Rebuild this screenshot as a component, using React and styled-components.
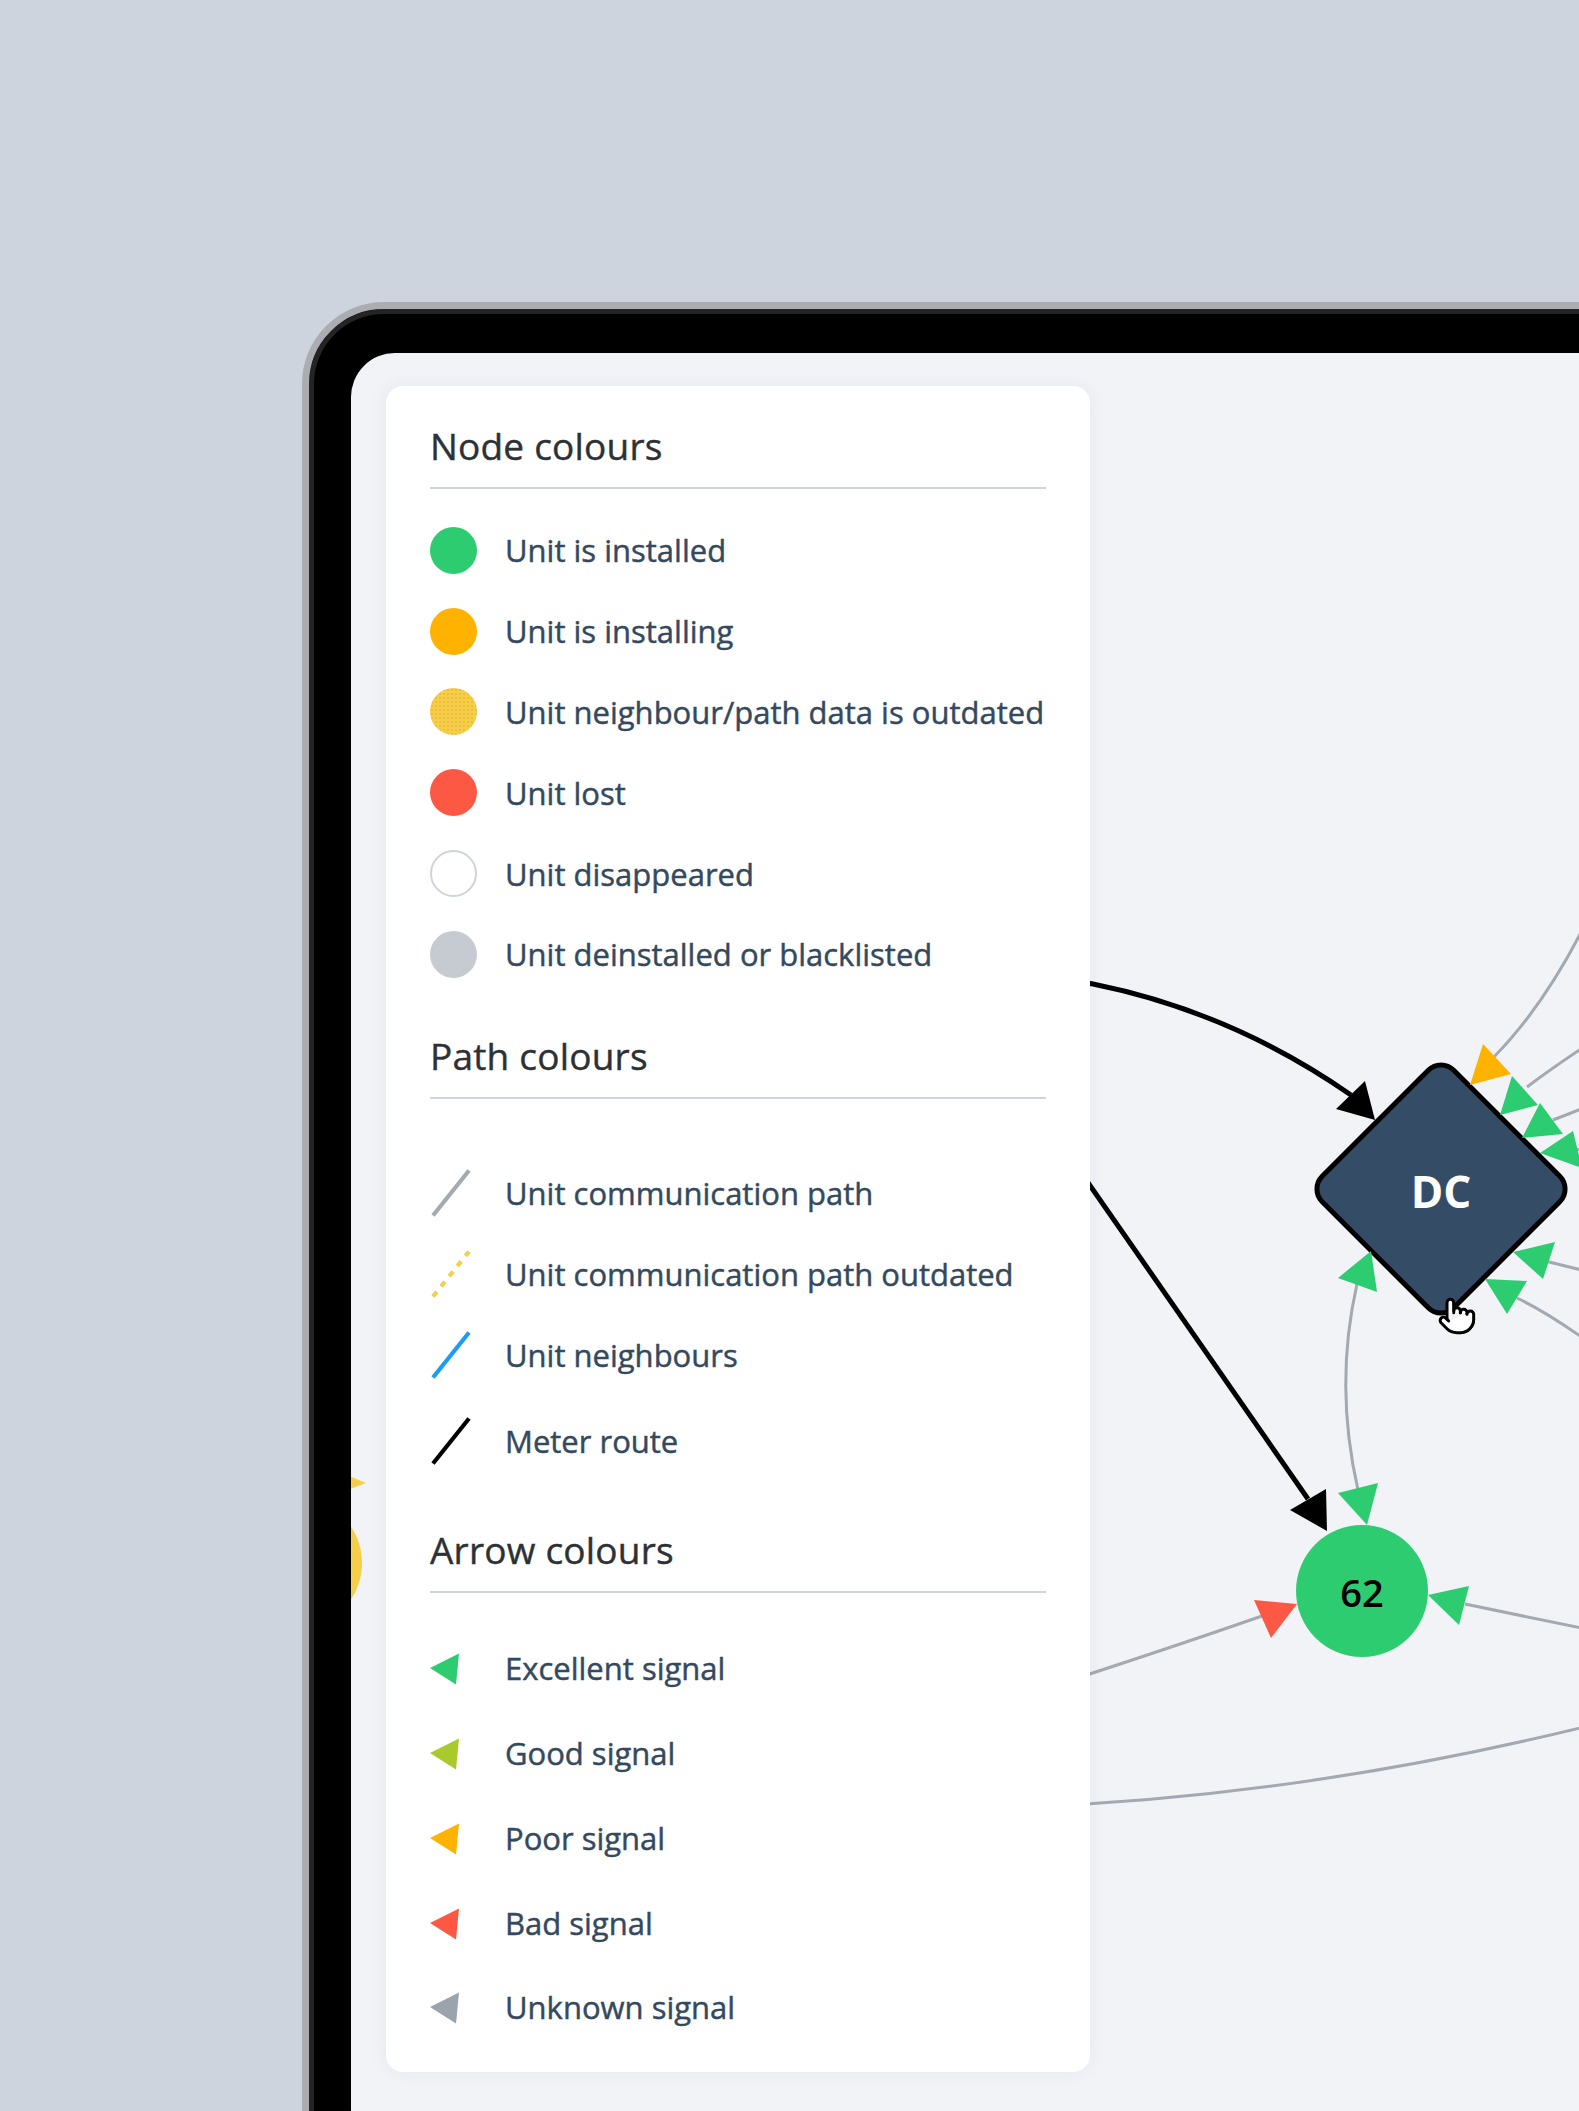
import React from 'react';
import styled, { createGlobalStyle } from 'styled-components';
import { Pointer } from 'lucide-react';

const GlobalStyle = createGlobalStyle`
  html, body {
    margin: 0;
    padding: 0;
    background: #cdd4de;
    overflow: hidden;
  }

  body {
    font-family: 'Open Sans', 'Noto Sans', sans-serif;
  }
`;

const nodeItems = [
  { label: 'Unit is installed', kind: 'installed' },
  { label: 'Unit is installing', kind: 'installing' },
  { label: 'Unit neighbour/path data is outdated', kind: 'outdated' },
  { label: 'Unit lost', kind: 'lost' },
  { label: 'Unit disappeared', kind: 'disappeared' },
  { label: 'Unit deinstalled or blacklisted', kind: 'deinstalled' },
];

const pathItems = [
  { label: 'Unit communication path', color: '#a4aab1' },
  { label: 'Unit communication path outdated', color: '#f5ce4a', dashed: true },
  { label: 'Unit neighbours', color: '#1e9cf1' },
  { label: 'Meter route', color: '#000000' },
];

const arrowItems = [
  { label: 'Excellent signal', color: '#2ecc71' },
  { label: 'Good signal', color: '#a9c92c' },
  { label: 'Poor signal', color: '#ffb200' },
  { label: 'Bad signal', color: '#fd5844' },
  { label: 'Unknown signal', color: '#9ba3ac' },
];

const nodeFills = {
  installed: '#2ecc71',
  installing: '#ffb300',
  outdated: '#f5cf4a',
  lost: '#fd5844',
  disappeared: '#ffffff',
  deinstalled: '#c6cad1',
};

const PathIcon = ({ color, dashed }) => (
  <svg width="42" height="50" viewBox="0 0 42 50">
    <line
      x1="3"
      y1="47.5"
      x2="39"
      y2="2.5"
      stroke={color}
      strokeWidth="4.2"
      strokeDasharray={dashed ? '6 7' : undefined}
    />
  </svg>
);

const ArrowIcon = ({ color }) => (
  <svg width="30" height="36" viewBox="0 0 30 36">
    <polygon points="0,18 29,3.5 26,34.5" fill={color} />
  </svg>
);

const Graph = () => (
  <Canvas width="1300" height="1800" viewBox="351 353 1300 1800">
    {/* node partly hidden on the left edge */}
    <circle cx="296" cy="1563" r="66" fill="#f5cf4a" />
    <polygon points="330,1468 330,1497 366,1483" fill="#f5cf4a" />

    {/* meter routes */}
    <path d="M 1000 968 L 1093 984 Q 1232 1012 1351 1095" stroke="#000" strokeWidth="5" fill="none" />
    <polygon points="1375,1120 1336,1109 1365,1081" fill="#000" />
    <path d="M 1000 1056 L 1308 1499" stroke="#000" strokeWidth="5" fill="none" />
    <polygon points="1327,1531 1290,1510 1326,1489" fill="#000" />

    {/* communication paths */}
    <g stroke="#a3a9b1" strokeWidth="3" fill="none">
      <path d="M 1357 1284 Q 1334 1385 1358 1490" />
      <path d="M 1000 1703 Q 1150 1655 1262 1616" />
      <path d="M 1465 1604 L 1620 1636" />
      <path d="M 1000 1808 Q 1300 1800 1620 1718" />
      <path d="M 1493 1058 Q 1560 990 1610 870" />
      <path d="M 1527 1087 Q 1560 1062 1610 1030" />
      <path d="M 1553 1120 L 1610 1098" />
      <path d="M 1575 1150 L 1610 1143" />
      <path d="M 1545 1261 L 1610 1277" />
      <path d="M 1517 1298 Q 1555 1316 1610 1358" />
    </g>

    {/* data concentrator */}
    <rect
      x="-93"
      y="-93"
      width="186"
      height="186"
      rx="18"
      fill="#354c66"
      stroke="#000"
      strokeWidth="5"
      transform="translate(1441 1189) rotate(45)"
    />
    <NodeText x="1441" y="1191" fill="#fff" size={44} weight={700}>
      DC
    </NodeText>

    <circle cx="1362" cy="1591" r="66" fill="#2ecc71" />
    <NodeText x="1362" y="1592" fill="#000" size={38} weight={600}>
      62
    </NodeText>

    {/* signal arrows */}
    <g fill="#2ecc71">
      <polygon points="1371,1251 1338,1278 1377,1292" />
      <polygon points="1367,1525 1338,1493 1378,1483" />
      <polygon points="1428,1595 1469,1586 1459,1625" />
      <polygon points="1500,1115 1512,1076 1538,1105" />
      <polygon points="1522,1138 1540,1103 1563,1134" />
      <polygon points="1540,1153 1573,1131 1582,1168" />
      <polygon points="1513,1252 1555,1242 1543,1279" />
      <polygon points="1485,1279 1527,1281 1507,1314" />
    </g>
    <polygon points="1470,1085 1483,1044 1511,1074" fill="#ffb200" />
    <polygon points="1297,1604 1254,1600 1271,1638" fill="#fd5844" />
  </Canvas>
);

const App = () => (
  <Stage>
    <GlobalStyle />
    <Device>
      <Screen>
        <Graph />
        <Cursor>
          <Pointer size={40} fill="#fff" color="#000" strokeWidth={1.8} />
        </Cursor>

        <Legend>
          <Section>
            <Heading>Node colours</Heading>
            <List offset={21}>
              {nodeItems.map(item => (
                <Row key={item.label} pitch={80.8}>
                  <IconSlot>
                    <Dot kind={item.kind} />
                  </IconSlot>
                  <Label>{item.label}</Label>
                </Row>
              ))}
            </List>
          </Section>

          <Section gap={36}>
            <Heading>Path colours</Heading>
            <List offset={54} lastGap={5}>
              {pathItems.map(item => (
                <Row key={item.label} pitch={80.8}>
                  <IconSlot>
                    <PathIcon color={item.color} dashed={item.dashed} />
                  </IconSlot>
                  <Label>{item.label}</Label>
                </Row>
              ))}
            </List>
          </Section>

          <Section gap={44}>
            <Heading>Arrow colours</Heading>
            <List offset={33}>
              {arrowItems.map(item => (
                <Row key={item.label} pitch={84.75}>
                  <IconSlot>
                    <ArrowIcon color={item.color} />
                  </IconSlot>
                  <Label>{item.label}</Label>
                </Row>
              ))}
            </List>
          </Section>
        </Legend>
      </Screen>
    </Device>
  </Stage>
);

const Stage = styled.div`
  box-sizing: border-box;
  height: 2111px;
  padding: 302px 0 0 302px;
  overflow: hidden;
`;

const Device = styled.div`
  width: 1400px;
  height: 1900px;
  padding: 44px 0 0 42px;
  border: 7px solid #abadb3;
  border-radius: 82px;
  background: #000;
  box-shadow: inset 0 0 0 5px #242424;
`;

const Screen = styled.div`
  position: relative;
  box-sizing: border-box;
  width: 1300px;
  height: 1800px;
  padding: 33px 0 0 35px;
  border-radius: 44px;
  background: #f1f3f7;
  overflow: hidden;
`;

const Canvas = styled.svg`
  position: absolute;
  top: 0;
  left: 0;
`;

const NodeText = styled.text`
  font-family: 'Open Sans', sans-serif;
  font-size: ${props => props.size}px;
  font-weight: ${props => props.weight};
  text-anchor: middle;
  dominant-baseline: central;
`;

const Cursor = styled.div`
  position: absolute;
  left: 1086px;
  top: 943px;
  display: flex;
`;

const Legend = styled.div`
  position: relative;
  box-sizing: border-box;
  width: 704px;
  padding: 35px 44px 22px;
  border-radius: 17px;
  background: #fff;
  box-shadow: 0 0 18px rgba(30, 45, 80, 0.06);
`;

const Section = styled.section`
  margin-top: ${props => props.gap || 0}px;
`;

const Heading = styled.h2`
  margin: 0;
  padding-bottom: 16px;
  border-bottom: 2px solid #cfd4da;
  font-size: 37px;
  line-height: 50px;
  font-weight: 400;
  letter-spacing: 0.2px;
  color: #2d3135;
  -webkit-text-stroke: 0.4px #2d3135;
`;

const List = styled.ul`
  list-style: none;
  margin: ${props => props.offset}px 0 0;
  padding: 0;

  li:last-child {
    margin-top: ${props => props.lastGap || 0}px;
  }
`;

const Row = styled.li`
  display: flex;
  align-items: center;
  height: ${props => props.pitch}px;
`;

const IconSlot = styled.div`
  display: flex;
  align-items: center;
  flex-shrink: 0;
  width: 75px;
`;

const Dot = styled.span`
  box-sizing: border-box;
  width: 47px;
  height: 47px;
  border-radius: 50%;
  background: ${props => nodeFills[props.kind]};
  border: ${props => (props.kind === 'disappeared' ? '2px solid #cfd4da' : 'none')};
  ${props =>
    props.kind === 'outdated' &&
    `background: radial-gradient(circle, #efb631 0.6px, transparent 1px) 0 0 / 4px 4px, #f5cf4a;`}
`;

const Label = styled.span`
  font-size: 31px;
  line-height: 42px;
  font-weight: 500;
  color: #34495e;
  -webkit-text-stroke: 0.45px #34495e;
  white-space: nowrap;
`;

export default App;
